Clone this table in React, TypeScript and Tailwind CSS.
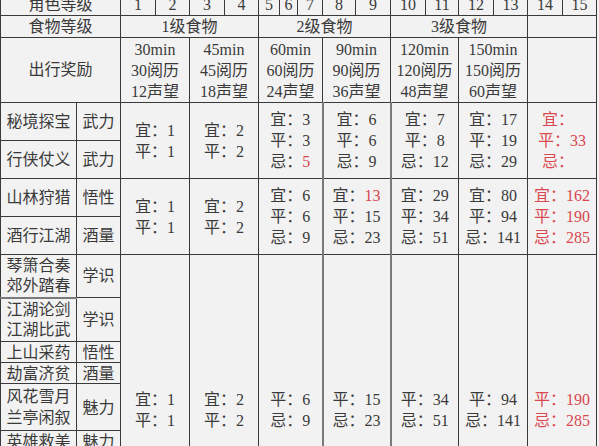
type Line = { k: string; v: string; red?: boolean };

const cell = "border border-[#3a3a3a] p-0 text-center align-middle";

const l = (k: string, v = "", red = false): Line => ({ k, v, red });

function Vals({ lines, red = false }: { lines: Line[]; red?: boolean }) {
  return (
    <div className={`flex flex-col items-center leading-[21px] ${red ? "text-[#d9484f]" : ""}`}>
      {lines.map((ln, i) => (
        <div key={i} className="whitespace-nowrap">
          {ln.k}：{ln.v ? <span className={ln.red ? "text-[#d9484f]" : ""}>{ln.v}</span> : <span className="inline-block w-[8px]" />}
        </div>
      ))}
    </div>
  );
}

const colWidths = [76, 44, 35, 34, 35, 34, 21, 18, 25, 33, 35, 35, 33, 35, 34, 35, 34];

const groups = [
  { span: 2, reward: ["30min", "30阅历", "12声望"] },
  { span: 2, reward: ["45min", "45阅历", "18声望"] },
  { span: 3, reward: ["60min", "60阅历", "24声望"] },
  { span: 2, reward: ["90min", "90阅历", "36声望"] },
  { span: 2, reward: ["120min", "120阅历", "48声望"] },
  { span: 2, reward: ["150min", "150阅历", "60声望"] },
  { span: 2, reward: [] as string[] },
];

const block1: Line[][] = [
  [l("宜", "1"), l("平", "1")],
  [l("宜", "2"), l("平", "2")],
  [l("宜", "3"), l("平", "3"), l("忌", "5", true)],
  [l("宜", "6"), l("平", "6"), l("忌", "9")],
  [l("宜", "7"), l("平", "8"), l("忌", "12")],
  [l("宜", "17"), l("平", "19"), l("忌", "29")],
  [l("宜"), l("平", "33"), l("忌")],
];

const block2: Line[][] = [
  [l("宜", "1"), l("平", "1")],
  [l("宜", "2"), l("平", "2")],
  [l("宜", "6"), l("平", "6"), l("忌", "9")],
  [l("宜", "13", true), l("平", "15"), l("忌", "23")],
  [l("宜", "29"), l("平", "34"), l("忌", "51")],
  [l("宜", "80"), l("平", "94"), l("忌", "141")],
  [l("宜", "162"), l("平", "190"), l("忌", "285")],
];

const block3: Line[][] = [
  [l("宜", "1"), l("平", "1")],
  [l("宜", "2"), l("平", "2")],
  [l("平", "6"), l("忌", "9")],
  [l("平", "15"), l("忌", "23")],
  [l("平", "34"), l("忌", "51")],
  [l("平", "94"), l("忌", "141")],
  [l("平", "190"), l("忌", "285")],
];

// the 90min and 120min columns have a heavier grey rule on their left
const heavy = ["", "", "", "border-l-2 border-l-[#7a7a7a]", "border-l-2 border-l-[#7a7a7a]", "", ""];

function Block({ data, rows, top }: { data: Line[][]; rows: number; top?: boolean }) {
  return (
    <>
      {data.map((lines, i) => (
        <td
          key={i}
          rowSpan={rows}
          colSpan={groups[i].span}
          className={`${cell} ${heavy[i]} ${top ? "align-top pt-[134px]" : ""}`}
        >
          <Vals lines={lines} red={i === 6} />
        </td>
      ))}
    </>
  );
}

export default function App() {
  return (
    <div className="w-[599px] h-[446px] overflow-hidden bg-[#f2f2f2] text-[#3a3a3a] text-[16px] font-['Liberation_Serif','Noto_Sans_CJK_SC',serif]">
      <table className="-mt-[7px] table-fixed border-collapse w-[596px]">
        <colgroup>
          {colWidths.map((w, i) => (
            <col key={i} style={{ width: w }} />
          ))}
        </colgroup>
        <tbody>
          <tr className="h-[22px] leading-[20px]">
            <td colSpan={2} className={cell}>角色等级</td>
            {Array.from({ length: 15 }, (_, i) => (
              <td key={i} className={cell}>{i + 1}</td>
            ))}
          </tr>
          <tr className="h-[22px] leading-[20px]">
            <td colSpan={2} className={cell}>食物等级</td>
            <td colSpan={4} className={cell}>1级食物</td>
            <td colSpan={5} className={cell}>2级食物</td>
            <td colSpan={4} className={cell}>3级食物</td>
            <td colSpan={2} className={cell}></td>
          </tr>
          <tr className="h-[65px]">
            <td colSpan={2} className={cell}>出行奖励</td>
            {groups.map((g, i) => (
              <td key={i} colSpan={g.span} className={`${cell} leading-[21px]`}>
                {g.reward.map((r) => (
                  <div key={r} className="whitespace-nowrap">{r}</div>
                ))}
              </td>
            ))}
          </tr>
          <tr className="h-[38px]">
            <td className={cell}>秘境探宝</td>
            <td className={cell}>武力</td>
            <Block data={block1} rows={2} />
          </tr>
          <tr className="h-[38px]">
            <td className={cell}>行侠仗义</td>
            <td className={cell}>武力</td>
          </tr>
          <tr className="h-[38px]">
            <td className={cell}>山林狩猎</td>
            <td className={cell}>悟性</td>
            <Block data={block2} rows={2} />
          </tr>
          <tr className="h-[38px]">
            <td className={cell}>酒行江湖</td>
            <td className={cell}>酒量</td>
          </tr>
          <tr className="h-[43px] leading-[20px]">
            <td className={cell}>琴箫合奏<br />郊外踏春</td>
            <td className={cell}>学识</td>
            <Block data={block3} rows={7} top />
          </tr>
          <tr className="h-[44px] leading-[20px]">
            <td className={`${cell} border-t-2 border-t-[#7a7a7a]`}>江湖论剑<br />江湖比武</td>
            <td className={cell}>学识</td>
          </tr>
          <tr className="h-[21px] leading-[19px]">
            <td className={cell}>上山采药</td>
            <td className={cell}>悟性</td>
          </tr>
          <tr className="h-[21px] leading-[19px]">
            <td className={cell}>劫富济贫</td>
            <td className={cell}>酒量</td>
          </tr>
          <tr className="h-[47px] leading-[21px]">
            <td className={cell}>风花雪月<br />兰亭闲叙</td>
            <td className={cell}>魅力</td>
          </tr>
          <tr className="h-[22px] leading-[20px]">
            <td className={cell}>英雄救美</td>
            <td className={cell}>魅力</td>
          </tr>
          <tr className="h-[60px]">
            <td className={cell}></td>
            <td className={cell}></td>
          </tr>
        </tbody>
      </table>
    </div>
  );
}
